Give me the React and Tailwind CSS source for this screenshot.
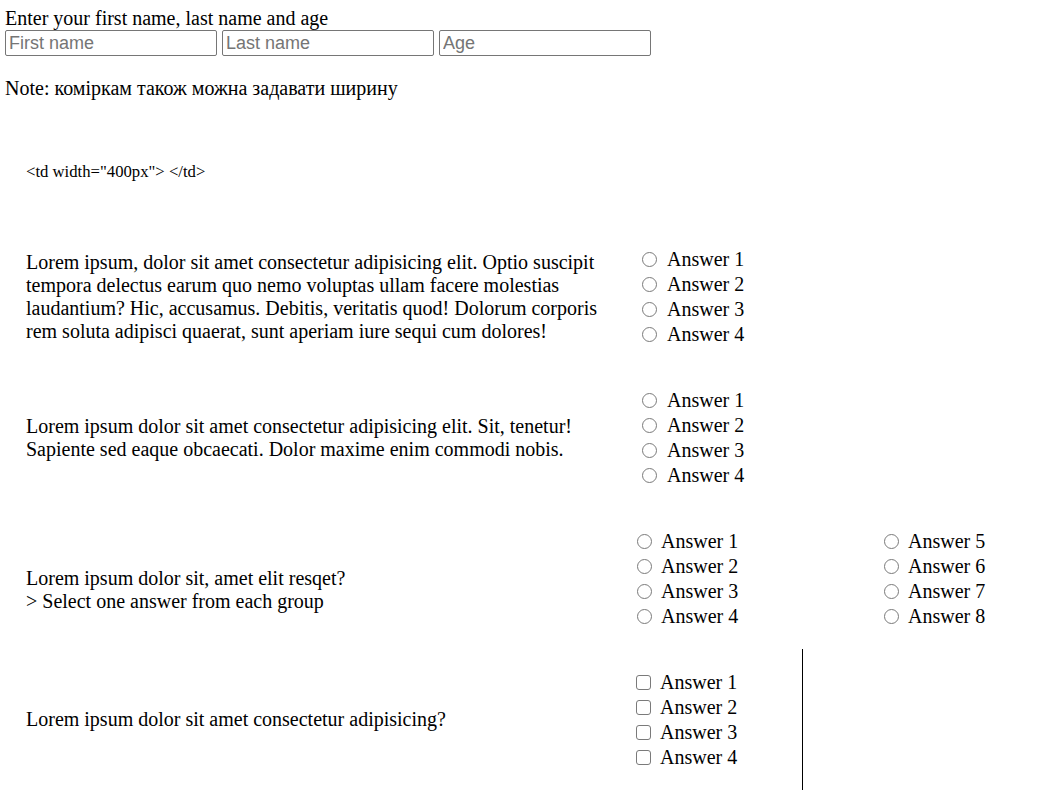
import React from "react";

/* ── Native-looking controls ── */
const Radio = () => (
  <span className="inline-block w-[15px] h-[15px] rounded-full border border-[#7a7a7a] bg-white shrink-0" />
);

const Check = () => (
  <span className="inline-block w-[15px] h-[15px] rounded-[3px] border border-[#7a7a7a] bg-white shrink-0" />
);

const Options = ({ labels, box = false, gap = "gap-[10px]" }) => (
  <div className="flex flex-col">
    {labels.map((label) => (
      <label key={label} className={`flex items-center ${gap} leading-[25px]`}>
        {box ? <Check /> : <Radio />}
        <span>{label}</span>
      </label>
    ))}
  </div>
);

const answers = ["Answer 1", "Answer 2", "Answer 3", "Answer 4"];
const answersB = ["Answer 5", "Answer 6", "Answer 7", "Answer 8"];

const Field = ({ placeholder }) => (
  <input
    placeholder={placeholder}
    className="w-[212px] h-[26px] border border-[#767676] rounded-[2px] px-[3px] text-[18px] placeholder:text-[#757575] outline-none"
    style={{ fontFamily: "'Liberation Sans', Arial, sans-serif" }}
  />
);

export default function App() {
  return (
    <div
      className="w-[1039px] min-h-[810px] bg-white text-black text-[20px] leading-[23px]"
      style={{ fontFamily: "'Liberation Serif', 'Times New Roman', serif" }}
    >
      <div className="pl-[5px] pt-[7px]">
        <p>Enter your first name, last name and age</p>
        <div className="flex gap-[5px]">
          <Field placeholder="First name" />
          <Field placeholder="Last name" />
          <Field placeholder="Age" />
        </div>
        <p className="mt-[21px]">Note: коміркам також можна задавати ширину</p>
      </div>

      <p className="pl-[26px] mt-[62px] text-[16.7px] leading-[20px]">
        &lt;td width="400px"&gt; &lt;/td&gt;
      </p>

      <div className="mt-[44px] flex flex-col">
        {/* row 1 */}
        <div className="flex items-center h-[141px]">
          <div className="w-[636px] pl-[26px] pr-[20px]">
            Lorem ipsum, dolor sit amet consectetur adipisicing elit. Optio suscipit tempora
            delectus earum quo nemo voluptas ullam facere molestias laudantium? Hic, accusamus.
            Debitis, veritatis quod! Dolorum corporis rem soluta adipisci quaerat, sunt aperiam
            iure sequi cum dolores!
          </div>
          <div className="pl-[6px]">
            <Options labels={answers} />
          </div>
        </div>

        {/* row 2 */}
        <div className="flex items-center h-[141px]">
          <div className="w-[636px] pl-[26px] pr-[20px]">
            Lorem ipsum dolor sit amet consectetur adipisicing elit. Sit, tenetur! Sapiente sed
            eaque obcaecati. Dolor maxime enim commodi nobis.
          </div>
          <div className="pl-[6px]">
            <Options labels={answers} />
          </div>
        </div>

        {/* row 3 */}
        <div className="flex items-center h-[141px]">
          <div className="w-[636px] pl-[26px] pr-[20px] mt-[22px]">
            Lorem ipsum dolor sit, amet elit resqet?
            <br />
            &gt; Select one answer from each group
          </div>
          <div className="flex pl-[1px]">
            <div className="w-[247px]">
              <Options labels={answers} gap="gap-[9px]" />
            </div>
            <Options labels={answersB} gap="gap-[9px]" />
          </div>
        </div>

        {/* row 4 */}
        <div className="flex items-center h-[141px]">
          <div className="w-[636px] pl-[26px] pr-[20px]">
            Lorem ipsum dolor sit amet consectetur adipisicing?
          </div>
          <div className="h-full w-[167px] flex items-center border-r border-black">
            <Options labels={answers} box gap="gap-[9px]" />
          </div>
        </div>
      </div>
    </div>
  );
}
